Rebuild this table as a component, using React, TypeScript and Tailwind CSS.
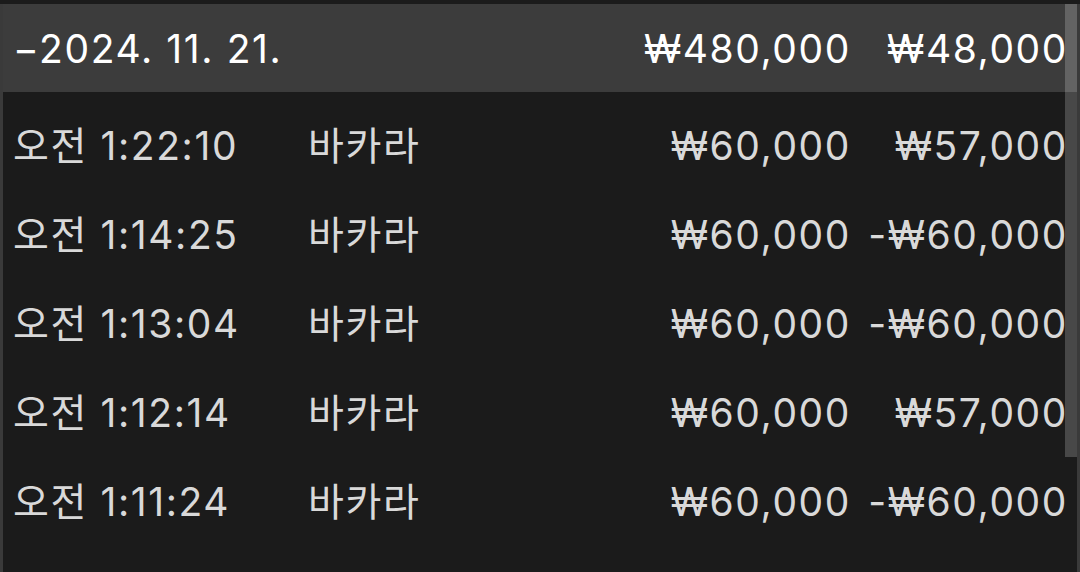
import React from 'react';

const rows = [
  { time: '오전 1:22:10', game: '바카라', bet: '₩60,000', result: '₩57,000' },
  { time: '오전 1:14:25', game: '바카라', bet: '₩60,000', result: '-₩60,000' },
  { time: '오전 1:13:04', game: '바카라', bet: '₩60,000', result: '-₩60,000' },
  { time: '오전 1:12:14', game: '바카라', bet: '₩60,000', result: '₩57,000' },
  { time: '오전 1:11:24', game: '바카라', bet: '₩60,000', result: '-₩60,000' },
];

export default function App() {
  return (
    <div
      className="w-[1080px] h-[572px] bg-[#1b1b1b] pt-1 overflow-hidden"
      style={{ fontFamily: 'Inter, "Noto Sans CJK KR", sans-serif' }}
    >
      <div className="relative h-[568px] border-x-[3px] border-[#3a3a3a] text-[39px] leading-none tracking-[1.6px]">
        {/* day header */}
        <div className="h-[88px] bg-[#3c3c3c] flex items-center pl-[10px] pr-[9px] text-white">
          <div className="flex-1">−2024. 11. 21.</div>
          <div className="text-right">₩480,000</div>
          <div className="w-[217px] text-right">₩48,000</div>
        </div>

        {/* entries */}
        <div className="pt-[9px]">
          {rows.map((r, i) => (
            <div key={i} className="h-[89px] flex items-center pl-[10px] pr-[9px] text-[#d9d9d9]">
              <div className="w-[295px]">{r.time}</div>
              <div className="flex-1">{r.game}</div>
              <div className="text-right">{r.bet}</div>
              <div className="w-[217px] text-right">{r.result}</div>
            </div>
          ))}
        </div>

        {/* scrollbar thumb */}
        <div className="absolute right-0 top-0 w-[12px] h-[453px] bg-white/20" />
      </div>
    </div>
  );
}
